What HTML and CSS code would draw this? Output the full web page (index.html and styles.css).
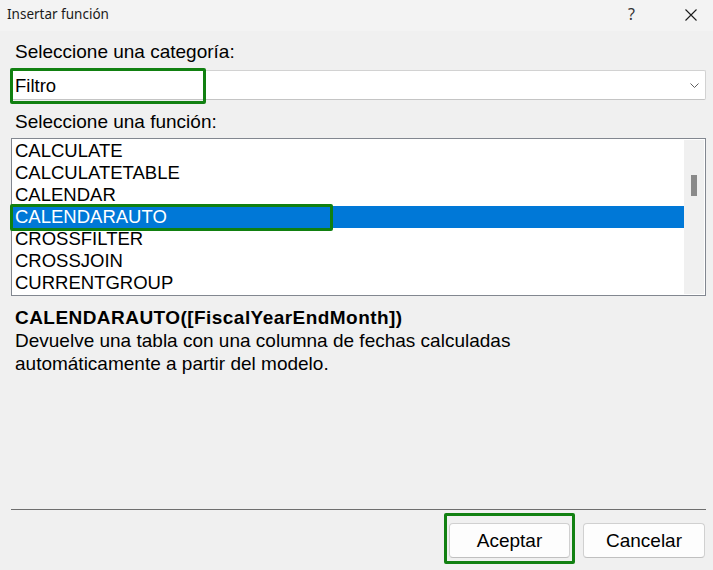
FILE: index.html
```html
<!DOCTYPE html>
<html lang="es">
<head>
<meta charset="utf-8">
<title>Insertar función</title>
<link rel="stylesheet" href="styles.css">
</head>
<body>
<div class="dialog">
  <div class="titlebar">
    <span class="title">Insertar función</span>
    <span class="help">?</span>
    <span class="close">
      <svg width="12" height="12" viewBox="0 0 12 12"><path d="M0.5 0.5 L11.5 11.5 M11.5 0.5 L0.5 11.5" stroke="#1a1a1a" stroke-width="1.1" fill="none"/></svg>
    </span>
  </div>
  <div class="content">
    <div class="label label-cat">Seleccione una categoría:</div>
    <div class="combo">
      <span class="combo-value">Filtro</span>
      <svg class="chev" width="9" height="5" viewBox="0 0 9 5"><path d="M0.5 0.5 L4.5 4.5 L8.5 0.5" stroke="#5f5f5f" stroke-width="1" fill="none"/></svg>
      <div class="hl hl-combo"></div>
    </div>
    <div class="label label-fn">Seleccione una función:</div>
    <div class="listbox">
      <ul class="items">
        <li>CALCULATE</li>
        <li>CALCULATETABLE</li>
        <li>CALENDAR</li>
        <li class="sel">CALENDARAUTO</li>
        <li>CROSSFILTER</li>
        <li>CROSSJOIN</li>
        <li>CURRENTGROUP</li>
      </ul>
      <div class="scrollbar"><div class="thumb"></div></div>
      <div class="hl hl-item"></div>
    </div>
    <div class="desc">
      <div class="syntax">CALENDARAUTO([FiscalYearEndMonth])</div>
      <div class="text">Devuelve una tabla con una columna de fechas calculadas automáticamente a partir del modelo.</div>
    </div>
    <div class="sep"></div>
    <div class="buttons">
      <button class="btn btn-ok">Aceptar<span class="hl hl-ok"></span></button>
      <button class="btn btn-cancel">Cancelar</button>
    </div>
  </div>
</div>
</body>
</html>
```
FILE: styles.css
```css
* { box-sizing: border-box; }
html, body { margin: 0; padding: 0; }
body {
  width: 713px;
  height: 570px;
  background: #f0f0f0;
  font-family: "Liberation Sans", Arial, sans-serif;
  color: #000;
  overflow: hidden;
}
.dialog {
  width: 713px;
  height: 570px;
  display: flex;
  flex-direction: column;
}
.titlebar {
  height: 31px;
  background: #f3f3f3;
  display: flex;
  align-items: center;
  padding-left: 7px;
  padding-bottom: 3px;
  font-family: "Noto Sans", "Open Sans", sans-serif;
  font-size: 13.5px;
  color: #1a1a1a;
}
.title { flex: 1; }
.help {
  width: 12px;
  margin-right: 45px;
  font-size: 16px;
  color: #333;
}
.close {
  width: 12px;
  height: 12px;
  margin-right: 16px;
  margin-top: 2px;
  display: flex;
}
.content {
  flex: 1;
  display: flex;
  flex-direction: column;
  padding: 0 7px 12px 10px;
  font-size: 19px;
  line-height: 22px;
}
.label { padding-left: 5px; }
.label-cat { margin-top: 10px; }
.combo {
  position: relative;
  margin-top: 7px;
  height: 30px;
  background: #fff;
  border: 1px solid #d2d2d2;
  border-bottom-color: #c4c4c4;
  border-radius: 2px;
  display: flex;
  align-items: center;
  padding-left: 4px;
  padding-right: 6px;
  padding-top: 1px;
  font-size: 18.5px;
}
.combo-value { flex: 1; }
.chev { display: block; }
.hl {
  position: absolute;
  border: 3px solid #118011;
  border-radius: 2px;
  pointer-events: none;
}
.hl-combo { left: -1px; top: -3px; width: 196px; height: 36px; }
.label-fn { margin-top: 11px; }
.listbox {
  position: relative;
  margin-top: 5px;
  margin-left: 1px;
  height: 158px;
  background: #fff;
  border: 1px solid #828790;
  display: flex;
  padding: 1px 0 1px 0;
  font-size: 18.5px;
}
.items {
  list-style: none;
  margin: 0;
  padding: 0;
  flex: 1;
}
.items li {
  height: 22px;
  line-height: 22px;
  padding-left: 3px;
  white-space: nowrap;
}
.items li.sel {
  background: #0078d7;
  color: #fff;
}
.scrollbar {
  width: 20px;
  margin-right: 1px;
  background: #f0f0f0;
  display: flex;
  justify-content: center;
  padding-top: 35px;
}
.thumb {
  width: 6px;
  height: 21px;
  background: #8a8a8a;
}
.hl-item { left: -2px; top: 65px; width: 323px; height: 27px; }
.desc { margin-top: 11px; padding-left: 5px; }
.syntax { font-weight: bold; line-height: 22px; letter-spacing: 0.45px; }
.text { line-height: 23px; width: 520px; }
.sep {
  margin-top: auto;
  margin-left: 1px;
  height: 1px;
  background: #6e6e6e;
}
.buttons {
  margin-top: 13px;
  display: flex;
  justify-content: flex-end;
  gap: 13px;
  padding-right: 1px;
}
.btn {
  position: relative;
  height: 35px;
  background: #fdfdfd;
  border: 1px solid #d0d0d0;
  border-bottom-color: #c0c0c0;
  border-radius: 4px;
  font-family: "Liberation Sans", Arial, sans-serif;
  font-size: 19px;
  color: #000;
  padding: 0;
}
.btn-ok { width: 121px; }
.btn-cancel { width: 122px; }
.hl-ok { left: -6px; top: -11px; width: 131px; height: 51px; }
```
